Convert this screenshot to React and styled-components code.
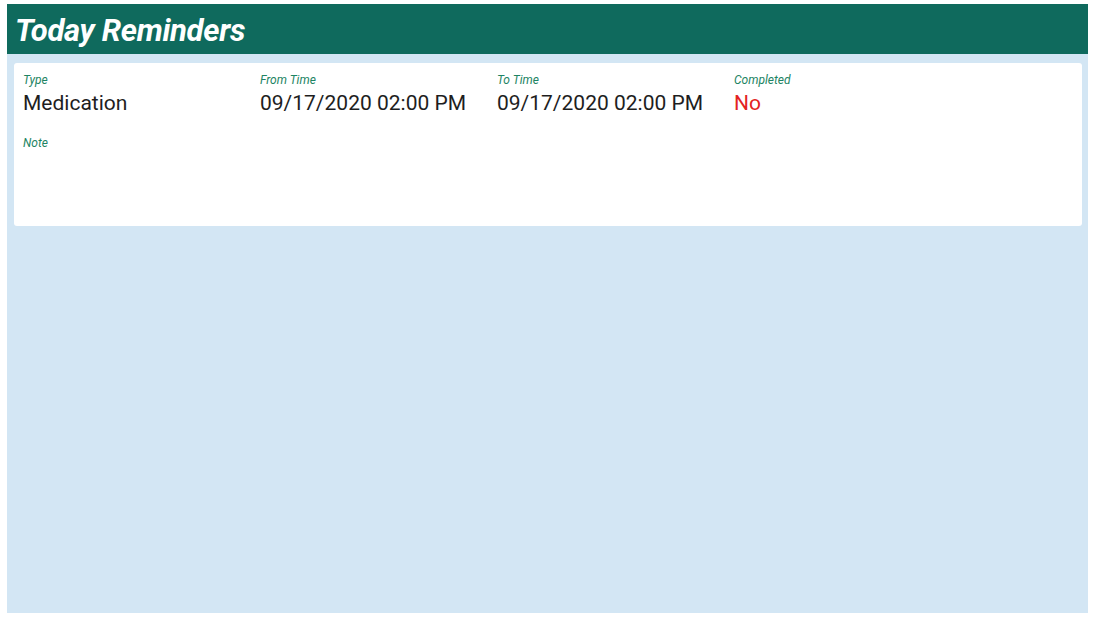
import React from 'react'
import styled, {createGlobalStyle} from 'styled-components'

const GlobalStyle = createGlobalStyle`
  html, body {
    margin: 0;
    padding: 0;
    background: #fff;
    font-family: Roboto, "Liberation Sans", sans-serif;
  }
`

const Page = styled.div`
  padding: 4px 9px 9px 7px;
`

const Frame = styled.div`
  width: 1081px;
  height: 609px;
  background-color: #d3e6f4;
  display: flex;
  flex-direction: column;
`

const Header = styled.div`
  height: 50px;
  background-color: #0f6a5d;
  display: flex;
  align-items: center;
  padding-left: 8px;
  padding-top: 3px;
  box-sizing: border-box;
`

const Title = styled.h1`
  margin: 0;
  color: #fff;
  font-size: 31px;
  font-weight: bold;
  font-style: italic;
  letter-spacing: -0.3px;
`

const Card = styled.div`
  margin: 9px 6px 0 7px;
  height: 163px;
  background: #fff;
  border-radius: 3px;
  padding: 10px 9px;
  box-sizing: border-box;
`

const Row = styled.div`
  display: grid;
  grid-template-columns: repeat(4, 237px);
  margin-bottom: 20px;
`

const Field = styled.div`
  display: flex;
  flex-direction: column;
`

const Label = styled.span`
  font-size: 12px;
  font-style: italic;
  color: #1d8463;
  line-height: 14px;
`

const Value = styled.span`
  font-size: 21px;
  color: ${props => props.danger ? '#e32222' : '#1e1e1e'};
  line-height: 26px;
  margin-top: 3px;
`

const fields = [
    {label: 'Type', value: 'Medication'},
    {label: 'From Time', value: '09/17/2020 02:00 PM'},
    {label: 'To Time', value: '09/17/2020 02:00 PM'},
    {label: 'Completed', value: 'No', danger: true},
]

const App = () => {
    return (
        <Page>
            <GlobalStyle/>
            <Frame>
                <Header>
                    <Title>Today Reminders</Title>
                </Header>
                <Card>
                    <Row>
                        {fields.map(f => (
                            <Field key={f.label}>
                                <Label>{f.label}</Label>
                                <Value danger={f.danger}>{f.value}</Value>
                            </Field>
                        ))}
                    </Row>
                    <Field>
                        <Label>Note</Label>
                    </Field>
                </Card>
            </Frame>
        </Page>
    )
}

export default App
